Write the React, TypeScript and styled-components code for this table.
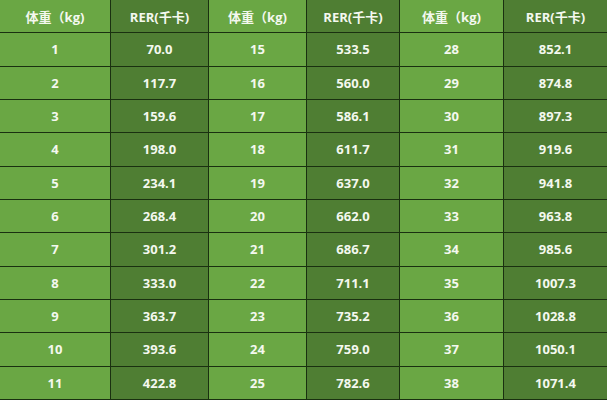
import React from "react";
import styled, { createGlobalStyle } from "styled-components";

const GlobalStyle = createGlobalStyle`
  html, body {
    margin: 0;
    padding: 0;
    background: #ffffff;
  }
`;

const Table = styled.div`
  display: grid;
  grid-template-columns: 110px 97px 97px 92px 103px 1fr;
  grid-template-rows: repeat(12, 1fr);
  gap: 1px;
  width: 607px;
  height: 400px;
  box-sizing: border-box;
  border-bottom: 1px solid #1a3010;
  background: #1a3010;
  font-family: "Open Sans", "Noto Sans CJK SC", sans-serif;
`;

const Cell = styled.div<{ $dark?: boolean }>`
  display: flex;
  align-items: center;
  justify-content: center;
  background: ${(p) => (p.$dark ? "#4f7e33" : "#6aa744")};
  color: #f4f8ef;
  font-size: 13px;
  font-weight: 700;
`;

const columns: [number, string][][] = [
  [
    [1, "70.0"], [2, "117.7"], [3, "159.6"], [4, "198.0"], [5, "234.1"],
    [6, "268.4"], [7, "301.2"], [8, "333.0"], [9, "363.7"], [10, "393.6"],
    [11, "422.8"],
  ],
  [
    [15, "533.5"], [16, "560.0"], [17, "586.1"], [18, "611.7"], [19, "637.0"],
    [20, "662.0"], [21, "686.7"], [22, "711.1"], [23, "735.2"], [24, "759.0"],
    [25, "782.6"],
  ],
  [
    [28, "852.1"], [29, "874.8"], [30, "897.3"], [31, "919.6"], [32, "941.8"],
    [33, "963.8"], [34, "985.6"], [35, "1007.3"], [36, "1028.8"],
    [37, "1050.1"], [38, "1071.4"],
  ],
];

export default function App() {
  const rows = columns[0].map((_, i) => i);
  return (
    <>
      <GlobalStyle />
      <Table>
        {columns.map((_, c) => (
          <React.Fragment key={`h${c}`}>
            <Cell>体重（kg)</Cell>
            <Cell $dark>RER(千卡)</Cell>
          </React.Fragment>
        ))}
        {rows.map((r) =>
          columns.map((col, c) => (
            <React.Fragment key={`${r}-${c}`}>
              <Cell>{col[r][0]}</Cell>
              <Cell $dark>{col[r][1]}</Cell>
            </React.Fragment>
          ))
        )}
      </Table>
    </>
  );
}
